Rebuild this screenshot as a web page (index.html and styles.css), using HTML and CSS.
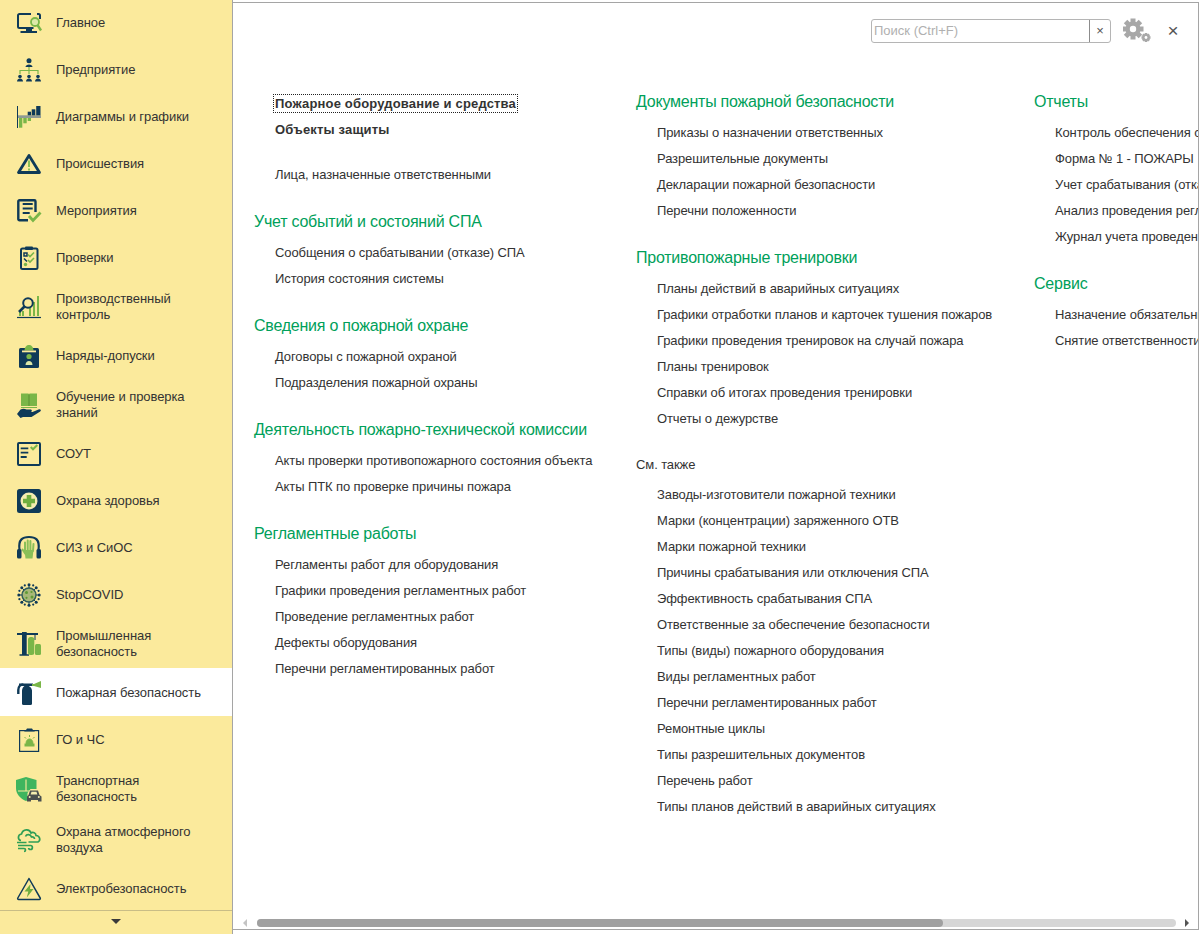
FILE: index.html
```html
<!DOCTYPE html>
<html>
<head>
    <meta charset="utf-8">
    <title>Пожарная безопасность</title>
    <link rel="stylesheet" href="styles.css">
</head>
<body>
    <nav class="sidebar">
        <ul class="menu">
            <li class="menu-item">
                <svg class="icon" viewBox="0 0 24 24"><path d="M14 3H2.500a1.500 1.500 0 0 0-1.500 1.500v11a1.500 1.500 0 0 0 1.500 1.500h14M23 8V4.500A1.500 1.500 0 0 0 21.500 3H20" fill="none" stroke="#0f3a58" stroke-width="2"/><path d="M9 17h6v3H9z" fill="#0f3a58"/><path d="M3.500 21h16.500" stroke="#0f3a58" stroke-width="2" fill="none"/><circle cx="18" cy="11" r="4" fill="#dce8a8" stroke="#7ab648" stroke-width="1.800"/><path d="M20.500 14l3.500 5.500" stroke="#7ab648" stroke-width="2.400"/></svg>
                <span>Главное</span>
            </li>
            <li class="menu-item">
                <svg class="icon" viewBox="0 0 24 24"><circle cx="12" cy="2.800" r="2.500" fill="#0f3a58"/><path d="M8.500 9c0-3.500 7-3.500 7 0z" fill="#0f3a58"/><path d="M12 9v7M3 16v-3.500h18V16" stroke="#7ab648" stroke-width="1.200" fill="none"/><g fill="#0f3a58"><circle cx="3" cy="18.500" r="1.800"/><path d="M0 23.500c0-4 6-4 6 0z"/><circle cx="12" cy="18.500" r="1.800"/><path d="M9 23.500c0-4 6-4 6 0z"/><circle cx="21" cy="18.500" r="1.800"/><path d="M18 23.500c0-4 6-4 6 0z"/></g></svg>
                <span>Предприятие</span>
            </li>
            <li class="menu-item">
                <svg class="icon" viewBox="0 0 24 24"><rect y="1" width="1" height="22" fill="#0f3a58"/><rect x="1" y="10.300" width="23" height="2.700" fill="#8f9a94"/><g fill="#0f3a58"><rect x="10.700" y="6.700" width="3.300" height="3.600"/><rect x="14.700" y="4.300" width="3.600" height="6"/><rect x="19.200" y="1" width="4.300" height="9.300"/></g><g fill="#7ab648"><rect x="2" y="13" width="3.300" height="9.700"/><rect x="6.300" y="13" width="3.400" height="5.300"/><rect x="10.700" y="13" width="3.300" height="3"/></g></svg>
                <span>Диаграммы и графики</span>
            </li>
            <li class="menu-item">
                <svg class="icon" viewBox="0 0 24 24"><path d="M12 3.500L1.500 20.500h21z" fill="none" stroke="#0f3a58" stroke-width="2.800" stroke-linejoin="round"/><path d="M12 8.500v6.500M12 16.500v2" stroke="#8abf58" stroke-width="2" fill="none"/></svg>
                <span>Происшествия</span>
            </li>
            <li class="menu-item">
                <svg class="icon" viewBox="0 0 24 24"><path d="M11 21.200H2.500a1.200 1.200 0 0 1-1.200-1.200V2.500a1.200 1.200 0 0 1 1.200-1.200h14.800a1.200 1.200 0 0 1 1.200 1.200V13" fill="none" stroke="#0f3a58" stroke-width="2.400"/><path d="M5.700 5h10M5.700 9.500h10M5.700 14h7" stroke="#0f3a58" stroke-width="2.200" fill="none"/><path d="M12 17l4 4.500 7.500-8" fill="none" stroke="#7ab648" stroke-width="2.800"/></svg>
                <span>Мероприятия</span>
            </li>
            <li class="menu-item">
                <svg class="icon" viewBox="0 0 24 24"><rect x="4" y="2.500" width="16.500" height="20.500" rx="1.500" fill="none" stroke="#0f3a58" stroke-width="2"/><rect x="8" y="0.500" width="8" height="3.500" rx="1" fill="#0f3a58"/><path d="M7 7h3v3H7zM7 12.500l3 3" fill="none" stroke="#0f3a58" stroke-width="1.500"/><circle cx="8.500" cy="18.500" r="1.700" fill="#7ab648"/><path d="M11 8.500l2 2 4-4M11 14l2 2 4-4" fill="none" stroke="#7ab648" stroke-width="1.600"/></svg>
                <span>Проверки</span>
            </li>
            <li class="menu-item tall">
                <svg class="icon" viewBox="0 0 24 24"><g fill="#7ab648"><rect x="2" y="17" width="2" height="4"/><rect x="5" y="16" width="2" height="5"/><rect x="12" y="12" width="2" height="9"/><rect x="16" y="7" width="2" height="14"/><rect x="20" y="1" width="2" height="20"/></g><circle cx="11" cy="8" r="4.800" fill="#fbea9c" stroke="#0f3a58" stroke-width="2"/><path d="M7.500 11.500L2 17" stroke="#0f3a58" stroke-width="2.600"/><path d="M0 22.500h24" stroke="#0f3a58" stroke-width="1.200"/></svg>
                <span>Производственный контроль</span>
            </li>
            <li class="menu-item">
                <svg class="icon" viewBox="0 0 24 24"><rect x="2" y="4" width="20" height="20" rx="1.500" fill="#0f3a58"/><path d="M7.500 6.500C7.500 -1 16.500 -1 16.500 6.500z" fill="#7ab648"/><rect x="5" y="6.500" width="14" height="1.800" fill="#fbea9c"/><circle cx="12" cy="12.500" r="2.600" fill="#7ab648"/><path d="M8.500 21c0-5.500 7-5.500 7 0z" fill="#dce8a8"/></svg>
                <span>Наряды-допуски</span>
            </li>
            <li class="menu-item tall">
                <svg class="icon" viewBox="0 0 24 24"><path d="M4 0.500h7.500l.5 1 .5-1H20v12.500H4z" fill="#7ab648"/><path d="M12 1.500v11.500" stroke="#5b8f33" fill="none"/><path d="M4 14.500h16" stroke="#7ab648" fill="none"/><path d="M0 21l3.500-4.500c2-1 4-1 6 0h4c1.800 0 1.800 2.500 0 2.500H10h5.500l6-2.500c2-.7 3.200.9 1.700 2l-8.700 5.500H6l-2.500 1z" fill="#0f3a58"/></svg>
                <span>Обучение и проверка знаний</span>
            </li>
            <li class="menu-item">
                <svg class="icon" viewBox="0 0 24 24"><rect x="1" y="1" width="22" height="22" rx="1" fill="none" stroke="#0f3a58" stroke-width="2"/><path d="M3.700 6.300h7.600M3.700 10.700h7.600M3.700 15h6" stroke="#0f3a58" stroke-width="1.800" fill="none"/><path d="M13.700 5l2.300 2.300 4.300-4.300" fill="none" stroke="#7ab648" stroke-width="2"/></svg>
                <span>СОУТ</span>
            </li>
            <li class="menu-item">
                <svg class="icon" viewBox="0 0 24 24"><rect width="24" height="24" rx="2.500" fill="#0f3a58"/><circle cx="12" cy="12" r="8.500" fill="#f4edb0"/><path d="M9.700 6h4.600v3.700H18v4.600h-3.700V18H9.700v-3.700H6V9.700h3.700z" fill="#6fae3f"/></svg>
                <span>Охрана здоровья</span>
            </li>
            <li class="menu-item">
                <svg class="icon" viewBox="0 0 24 24"><path d="M2.500 14C1 3 6 1 12 1s11 2 9.500 13" fill="none" stroke="#0f3a58" stroke-width="2.200"/><rect y="13" width="4.500" height="9.500" rx="1.500" fill="#0f3a58"/><rect x="19.500" y="13" width="4.500" height="9.500" rx="1.500" fill="#0f3a58"/><path d="M8 15V6.500M10.700 14V4.500M13.400 14V5M16 15l.5-7M8.500 18l-3-4.500" fill="none" stroke="#8abf58" stroke-width="2" stroke-linecap="round"/><path d="M7.500 14h9l-1 8.500H8.500z" fill="#8abf58"/></svg>
                <span>СИЗ и СиОС</span>
            </li>
            <li class="menu-item">
                <svg class="icon" viewBox="0 0 24 24"><path d="M12 1v22M1 12h22M4.200 4.200l15.600 15.600M19.800 4.200L4.200 19.800" stroke="#0f3a58" stroke-width="1" fill="none"/><g fill="#0f3a58"><circle cx="12" cy="1.800" r="1.500"/><circle cx="12" cy="22.200" r="1.500"/><circle cx="1.800" cy="12" r="1.500"/><circle cx="22.200" cy="12" r="1.500"/><circle cx="4.800" cy="4.800" r="1.500"/><circle cx="19.200" cy="4.800" r="1.500"/><circle cx="4.800" cy="19.200" r="1.500"/><circle cx="19.200" cy="19.200" r="1.500"/><circle cx="7.800" cy="2.400" r="1.100"/><circle cx="16.200" cy="2.400" r="1.100"/><circle cx="7.800" cy="21.600" r="1.100"/><circle cx="16.200" cy="21.600" r="1.100"/><circle cx="2.400" cy="7.800" r="1.100"/><circle cx="2.400" cy="16.200" r="1.100"/><circle cx="21.600" cy="7.800" r="1.100"/><circle cx="21.600" cy="16.200" r="1.100"/></g><circle cx="12" cy="12" r="7" fill="#a8b878" stroke="#2d5a5a" stroke-width="1.400"/><g fill="#5f9a35"><circle cx="9.500" cy="9.500" r="1.500"/><circle cx="14.500" cy="9" r="1.100"/><circle cx="15" cy="14" r="1.500"/><circle cx="9.500" cy="14.800" r="1.100"/></g></svg>
                <span>StopCOVID</span>
            </li>
            <li class="menu-item tall">
                <svg class="icon" viewBox="0 0 24 24"><path d="M0 2h21" stroke="#0f3a58" stroke-width="2" fill="none"/><path d="M5 0h4.700v23H5z" fill="#0f3a58"/><path d="M2.500 23h9.500" stroke="#0f3a58" stroke-width="1.500"/><path d="M18 3v5" stroke="#0f3a58" stroke-width="1"/><rect x="11" y="5" width="6.300" height="18" rx="2.500" fill="#7ab648"/><rect x="18" y="12" width="6" height="11" rx="1.500" fill="#7ab648"/></svg>
                <span>Промышленная безопасность</span>
            </li>
            <li class="menu-item active">
                <svg class="icon" viewBox="0 0 24 24"><path d="M1.300 13V9c0-3 2-5.500 5-5.500" fill="none" stroke="#0f3a58" stroke-width="2.400"/><path d="M2 2.500h14V5H2z" fill="#0f3a58"/><path d="M6.500 24A1.500 1.500 0 0 1 5 22.500V10c0-2.500 1.500-5 3-5h3c2 0 4 2.500 4 5v12.500a1.500 1.500 0 0 1-1.500 1.500z" fill="#0f3a58"/><path d="M15 3h2l7-3v7l-7-2h-2z" fill="#7ab648"/></svg>
                <span>Пожарная безопасность</span>
            </li>
            <li class="menu-item">
                <svg class="icon" viewBox="0 0 24 24"><rect x="2.600" y="2.600" width="19" height="20.800" fill="none" stroke="#0f3a58" stroke-width="1.200"/><path d="M7 3.500L9 2l1-1.500h5L16 2l2 1.500z" fill="#0f3a58"/><rect x="7.500" y="15.500" width="10" height="3" fill="#7ab648"/><path d="M9 15.500c0-6 7-6 7 0zM12.500 7v2M7.500 9l1.500 1.500M17.500 9L16 10.500" fill="#7ab648" stroke="#7ab648"/></svg>
                <span>ГО и ЧС</span>
            </li>
            <li class="menu-item tall">
                <svg class="icon" viewBox="0 0 24 24"><path d="M9 0L-1 3v8c0 6 4 10.500 10 13 .8-.3 1.200-.6 1.500-1v-7l3-4h6V3z" fill="#3fb55e"/><path d="M9 2.500v11.500H1M9 14h5" stroke="#fbea9c" stroke-width="1.100" fill="none"/><path d="M11.500 18l1.500-4.500h8L22.500 18l2 1.500v5h-3.500v-1.500h-7v1.500H10v-5z" fill="#4a4f4f"/><path d="M14.500 14.800h5l.8 2.700h-6.600z" fill="#f4edb0"/><circle cx="12.700" cy="20" r="1" fill="#f4edb0"/><circle cx="21.800" cy="20" r="1" fill="#f4edb0"/></svg>
                <span>Транспортная безопасность</span>
            </li>
            <li class="menu-item tall">
                <svg class="icon" viewBox="0 0 24 24" fill="none" stroke="#2f9e55" stroke-width="1.700"><path d="M4 12.500c-3.500-.5-3.500-6 .5-6.500C6 1 12.500 .5 14 5c2-1.500 5 0 5 2.500 4 .2 5 5 2 6.500h-9.500"/><path d="M8.500 8.500c1-2.500 5-2.500 6 .5 2-.5 3 1 3 2"/><path d="M0 14.500h9.500M1 17.500h12.500c2.500 0 2.500 4 0 4-1.200 0-1.800-.8-1.800-1.500M1 20.500h6c2 0 2 3 0 3"/></svg>
                <span>Охрана атмосферного воздуха</span>
            </li>
            <li class="menu-item">
                <svg class="icon" viewBox="0 0 24 24"><path d="M12 1.500L.8 21a1 1 0 0 0 1 1.500h20.400a1 1 0 0 0 1-1.500z" fill="none" stroke="#0f3a58" stroke-width="1.500" stroke-linejoin="round"/><path d="M13.500 7L7.500 14.500h3.800l-1.500 6L16.500 12h-3.500z" fill="#6fae3f"/></svg>
                <span>Электробезопасность</span>
            </li>
        </ul>
        <div class="menu-more"><i class="more-arrow"></i></div>
    </nav>

    <main class="panel">
        <div class="toolbar">
            <div class="search">
                <span class="search-text">Поиск (Ctrl+F)</span>
                <span class="search-clear">×</span>
            </div>
            <svg class="gear" viewBox="0 0 28 25"><g fill="#a8a8a8"><circle cx="10" cy="11" r="7.500"/><rect x="7.500" y="0.500" width="5" height="21"/><rect x="-0.500" y="8.500" width="21" height="5"/><rect x="7.500" y="0.500" width="5" height="21" transform="rotate(45 10 11)"/><rect x="7.500" y="0.500" width="5" height="21" transform="rotate(-45 10 11)"/><circle cx="23" cy="19.500" r="3.600"/><rect x="21.700" y="15" width="2.600" height="9"/><rect x="18.500" y="18.200" width="9" height="2.600"/><rect x="21.700" y="15" width="2.600" height="9" transform="rotate(45 23 19.500)"/><rect x="21.700" y="15" width="2.600" height="9" transform="rotate(-45 23 19.500)"/></g><circle cx="10" cy="11" r="3.200" fill="#fff"/><circle cx="23" cy="19.500" r="1.400" fill="#fff"/></svg>
            <span class="close">×</span>
        </div>

        <div class="columns">
            <div class="column first">
                <section class="group main-links">
                    <a class="link strong"><span class="focused">Пожарное оборудование и средства</span></a>
                    <a class="link strong">Объекты защиты</a>
                </section>
                <section class="group">
                    <a class="link">Лица, назначенные ответственными</a>
                </section>
                <section class="group">
                    <h2>Учет событий и состояний СПА</h2>
                    <a class="link">Сообщения о срабатывании (отказе) СПА</a>
                    <a class="link">История состояния системы</a>
                </section>
                <section class="group">
                    <h2>Сведения о пожарной охране</h2>
                    <a class="link">Договоры с пожарной охраной</a>
                    <a class="link">Подразделения пожарной охраны</a>
                </section>
                <section class="group">
                    <h2>Деятельность пожарно-технической комиссии</h2>
                    <a class="link">Акты проверки противопожарного состояния объекта</a>
                    <a class="link">Акты ПТК по проверке причины пожара</a>
                </section>
                <section class="group">
                    <h2>Регламентные работы</h2>
                    <a class="link">Регламенты работ для оборудования</a>
                    <a class="link">Графики проведения регламентных работ</a>
                    <a class="link">Проведение регламентных работ</a>
                    <a class="link">Дефекты оборудования</a>
                    <a class="link">Перечни регламентированных работ</a>
                </section>
            </div>

            <div class="column">
                <section class="group">
                    <h2>Документы пожарной безопасности</h2>
                    <a class="link">Приказы о назначении ответственных</a>
                    <a class="link">Разрешительные документы</a>
                    <a class="link">Декларации пожарной безопасности</a>
                    <a class="link">Перечни положенности</a>
                </section>
                <section class="group">
                    <h2>Противопожарные тренировки</h2>
                    <a class="link">Планы действий в аварийных ситуациях</a>
                    <a class="link">Графики отработки планов и карточек тушения пожаров</a>
                    <a class="link">Графики проведения тренировок на случай пожара</a>
                    <a class="link">Планы тренировок</a>
                    <a class="link">Справки об итогах проведения тренировки</a>
                    <a class="link">Отчеты о дежурстве</a>
                </section>
                <section class="group">
                    <h3>См. также</h3>
                    <a class="link">Заводы-изготовители пожарной техники</a>
                    <a class="link">Марки (концентрации) заряженного ОТВ</a>
                    <a class="link">Марки пожарной техники</a>
                    <a class="link">Причины срабатывания или отключения СПА</a>
                    <a class="link">Эффективность срабатывания СПА</a>
                    <a class="link">Ответственные за обеспечение безопасности</a>
                    <a class="link">Типы (виды) пожарного оборудования</a>
                    <a class="link">Виды регламентных работ</a>
                    <a class="link">Перечни регламентированных работ</a>
                    <a class="link">Ремонтные циклы</a>
                    <a class="link">Типы разрешительных документов</a>
                    <a class="link">Перечень работ</a>
                    <a class="link">Типы планов действий в аварийных ситуациях</a>
                </section>
            </div>

            <div class="column">
                <section class="group">
                    <h2>Отчеты</h2>
                    <a class="link">Контроль обеспечения средствами</a>
                    <a class="link">Форма № 1 - ПОЖАРЫ</a>
                    <a class="link">Учет срабатывания (отказов) СПА</a>
                    <a class="link">Анализ проведения регламентных работ</a>
                    <a class="link">Журнал учета проведения тренировок</a>
                </section>
                <section class="group">
                    <h2>Сервис</h2>
                    <a class="link">Назначение обязательных работ</a>
                    <a class="link">Снятие ответственности</a>
                </section>
            </div>
        </div>

        <div class="scrollbar">
            <div class="scroll-btn"><i class="arrow-left"></i></div>
            <div class="track"><div class="thumb"></div></div>
            <div class="scroll-btn"><i class="arrow-right"></i></div>
        </div>
    </main>
</body>
</html>
```

FILE: styles.css
```css
* {
    box-sizing: border-box;
}

html, body {
    height: 100%;
}

body {
    margin: 0;
    display: flex;
    overflow: hidden;
    background-color: #fff;
    font-family: "Liberation Sans", Arial, sans-serif;
    font-size: 13px;
    color: #333;
}

/* left menu */
.sidebar {
    width: 233px;
    flex: none;
    display: flex;
    flex-direction: column;
    background-color: #fbea9c;
    border-right: 1px solid #a5a5a5;
}

.menu {
    list-style: none;
    flex: 1;
    min-height: 0;
    margin: -1px 0 0;
    padding: 0;
}

.menu-item {
    display: flex;
    align-items: center;
    gap: 15px;
    height: 47px;
    padding: 0 20px 0 17px;
    line-height: 16px;
    letter-spacing: -0.07px;
}

.menu-item.tall {
    height: 51px;
}

.menu-item.active {
    background-color: #fff;
    box-shadow: 0 -1px 0 #fff;
}

.icon {
    width: 24px;
    height: 24px;
    flex: none;
    overflow: visible;
}

.menu-more {
    height: 24px;
    flex: none;
    display: flex;
    justify-content: center;
    padding-top: 8px;
    border-top: 1px solid #c9bd86;
    background-color: #fbea9c;
}

.more-arrow {
    width: 0;
    height: 0;
    border-left: 5px solid transparent;
    border-right: 5px solid transparent;
    border-top: 5px solid #3a3a3a;
}

/* main panel */
.panel {
    flex: 1;
    min-width: 0;
    display: flex;
    flex-direction: column;
    margin: 2px 2px 4px 0;
    border-top: 1px solid #a5a5a5;
    border-right: 1px solid #a5a5a5;
    border-bottom: 1px solid #a5a5a5;
}

.toolbar {
    height: 86px;
    flex: none;
    display: flex;
    align-items: flex-start;
    justify-content: flex-end;
    padding: 16px 18px 0 0;
}

.search {
    width: 240px;
    height: 24px;
    display: flex;
    border: 1px solid #b5b5b5;
    border-radius: 3px;
}

.search-text {
    flex: 1;
    padding-left: 2px;
    line-height: 22px;
    color: #b0b0b0;
    border-right: 1px solid #8c8c8c;
}

.search-clear {
    width: 20px;
    text-align: center;
    line-height: 21px;
    color: #555;
}

.gear {
    width: 28px;
    height: 25px;
    margin: -1px 0 0 12px;
}

.close {
    width: 14px;
    margin-left: 15px;
    text-align: center;
    font-size: 19px;
    line-height: 24px;
    color: #555;
}

.columns {
    flex: 1;
    min-height: 0;
    display: grid;
    grid-template-columns: 382px 398px 400px;
    padding-left: 21px;
    overflow: hidden;
    white-space: nowrap;
}

.column {
    min-width: 0;
}

.first {
    padding-top: 2px;
}

.group {
    margin-bottom: 21px;
}

.main-links {
    margin-bottom: 19px;
}

.group h2 {
    margin: 0 0 5px;
    font-size: 16px;
    font-weight: normal;
    line-height: 26px;
    letter-spacing: -0.23px;
    color: #00a05a;
}

.group h3 {
    margin: -1px 0 4px;
    font-size: 13px;
    font-weight: normal;
    line-height: 26px;
    letter-spacing: -0.1px;
}

.link {
    display: block;
    padding-left: 21px;
    line-height: 26px;
    letter-spacing: -0.1px;
}

.link.strong {
    font-weight: bold;
    letter-spacing: 0.17px;
}

.focused {
    outline: 1px dotted #222;
    outline-offset: 1px;
}

/* horizontal scrollbar */
.scrollbar {
    height: 8px;
    flex: none;
    display: flex;
    margin: 0 0 2px;
}

.scroll-btn {
    width: 24px;
    flex: none;
    display: flex;
    align-items: center;
    justify-content: center;
}

.scroll-btn:last-child {
    width: 22px;
}

.arrow-left {
    border-top: 4px solid transparent;
    border-bottom: 4px solid transparent;
    border-right: 4px solid #c4c4c4;
}

.arrow-right {
    border-top: 4px solid transparent;
    border-bottom: 4px solid transparent;
    border-left: 4px solid #555;
}

.track {
    flex: 1;
    border-radius: 4px;
    background-color: #d6d6d6;
}

.thumb {
    width: 74.7%;
    height: 100%;
    border-radius: 4px;
    background-color: #a0a0a0;
}
```
